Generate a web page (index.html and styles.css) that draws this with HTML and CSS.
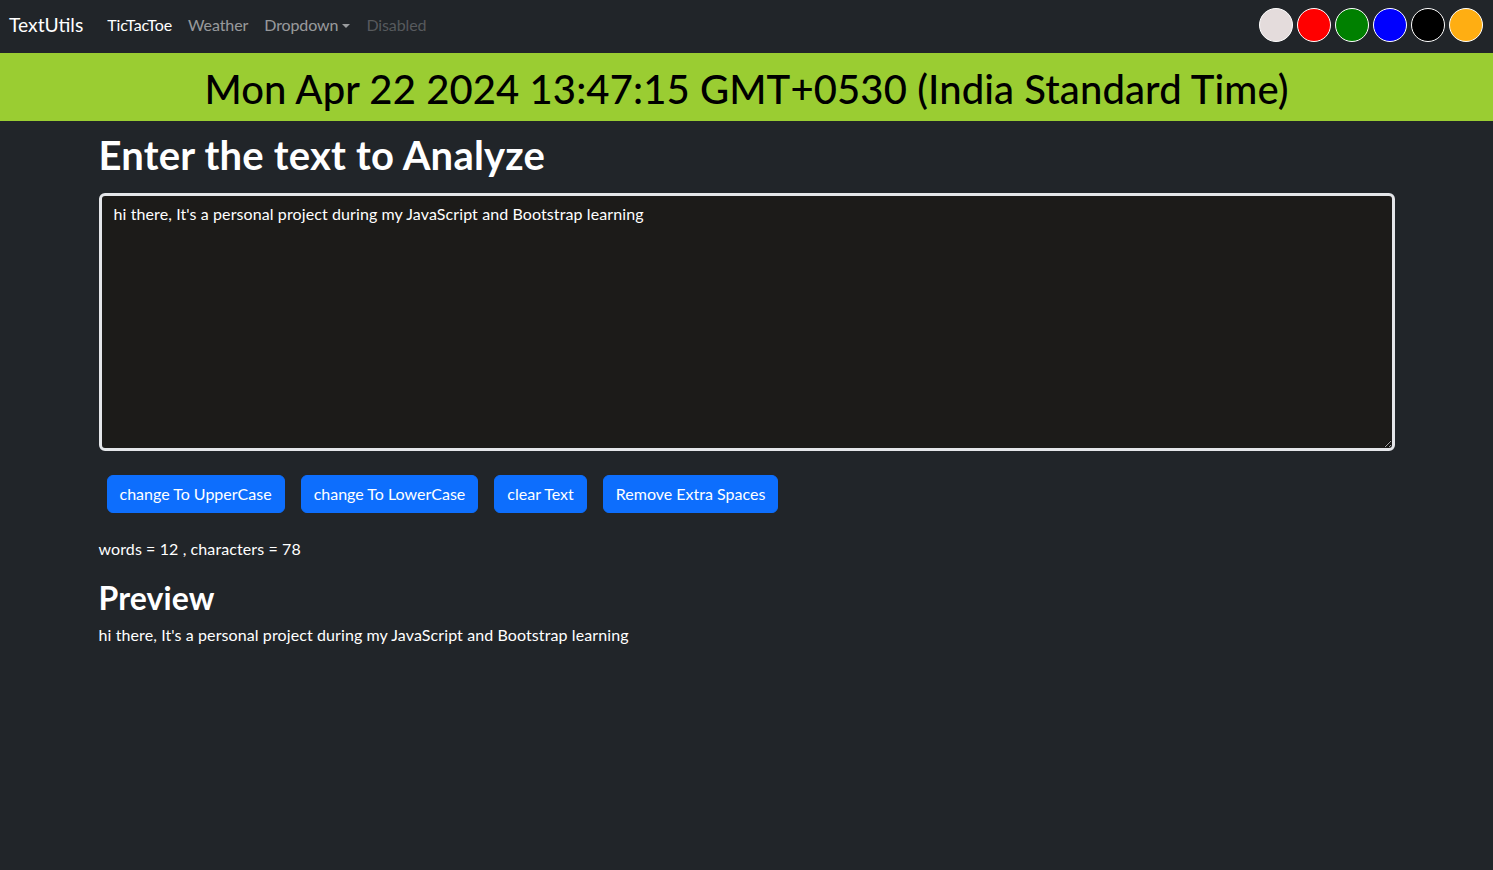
FILE: index.html
```html
<!DOCTYPE html>
<html lang="en">
<head>
<meta charset="utf-8">
<title>TextUtils</title>
<link rel="stylesheet" href="styles.css">
</head>
<body>
<nav class="navbar">
  <div class="nav-left">
    <a class="brand" href="#">TextUtils</a>
    <ul class="nav-links">
      <li><a class="nav-link active" href="#">TicTacToe</a></li>
      <li><a class="nav-link" href="#">Weather</a></li>
      <li><a class="nav-link dropdown" href="#">Dropdown<span class="caret"></span></a></li>
      <li><a class="nav-link disabled" href="#">Disabled</a></li>
    </ul>
  </div>
  <div class="swatches">
    <span class="swatch sw-light"></span>
    <span class="swatch sw-red"></span>
    <span class="swatch sw-green"></span>
    <span class="swatch sw-blue"></span>
    <span class="swatch sw-black"></span>
    <span class="swatch sw-orange"></span>
  </div>
</nav>
<div class="datebar">
  <h1 class="date">Mon Apr 22 2024 13:47:15 GMT+0530 (India Standard Time)</h1>
</div>
<main class="container">
  <h1 class="title">Enter the text to Analyze</h1>
  <textarea class="textbox" rows="8">hi there, It's a personal project during my JavaScript and Bootstrap learning</textarea>
  <div class="buttons">
    <button class="btn">change To UpperCase</button>
    <button class="btn">change To LowerCase</button>
    <button class="btn">clear Text</button>
    <button class="btn">Remove Extra Spaces</button>
  </div>
</main>
<section class="container summary">
  <p class="counts">words = 12 , characters = 78</p>
  <h2 class="preview-title">Preview</h2>
  <p class="preview">hi there, It's a personal project during my JavaScript and Bootstrap learning</p>
</section>
</body>
</html>
```
FILE: styles.css
```css
* { box-sizing: border-box; }
html, body {
  margin: 0;
  padding: 0;
  background: #212529;
  color: #fff;
  font-family: Lato, "Open Sans", sans-serif;
  font-size: 16px;
  line-height: 1.5;
  letter-spacing: 0.1px;
  min-height: 870px;
}
.navbar {
  height: 53px;
  display: flex;
  align-items: center;
  justify-content: space-between;
  padding: 0 10px 3px 9px;
  background: #212529;
}
.nav-left { display: flex; align-items: center; }
.brand {
  color: #fff;
  text-decoration: none;
  font-size: 19.3px;
  letter-spacing: 0;
  margin-right: 16px;
}
.nav-links {
  display: flex;
  list-style: none;
  margin: 0;
  padding: 0;
}
.nav-link {
  display: block;
  padding: 8px;
  color: rgba(255,255,255,.55);
  text-decoration: none;
  font-size: 16px;
  letter-spacing: -0.1px;
}
.nav-link.active { color: #fff; }
.nav-link.disabled { color: rgba(255,255,255,.25); }
.caret {
  display: inline-block;
  margin-left: 4px;
  vertical-align: 3px;
  border-top: 4px solid rgba(255,255,255,.55);
  border-left: 4px solid transparent;
  border-right: 4px solid transparent;
}
.swatches { display: flex; gap: 4px; }
.swatch {
  width: 34px;
  height: 34px;
  border-radius: 50%;
  border: 1px solid #fff;
}
.sw-light { background: #e4dcdc; }
.sw-red { background: #ff0000; }
.sw-green { background: #008000; }
.sw-blue { background: #0000ff; }
.sw-black { background: #000; }
.sw-orange { background: #ffae12; }
.datebar {
  background: #9acd32;
  height: 68px;
  padding-top: 3px;
  display: flex;
  align-items: center;
  justify-content: center;
}
.date {
  margin: 0;
  color: #000;
  font-size: 40px;
  font-weight: 500;
  line-height: 1.2;
  letter-spacing: 0.1px;
}
.container {
  width: 1320px;
  margin: 0 auto;
  padding: 0 12px;
}
.title {
  margin: 10px 0 14px;
  font-size: 40px;
  font-weight: 700;
  line-height: 1.2;
  letter-spacing: 0.2px;
}
.textbox {
  display: block;
  width: 100%;
  height: 258px;
  padding: 6px 12px;
  background: #1c1b19;
  color: #fff;
  border: 3px solid #e4e6e9;
  border-radius: 6px;
  font-family: inherit;
  font-size: 16px;
  line-height: 1.5;
  letter-spacing: 0.1px;
  resize: vertical;
}
.buttons {
  display: flex;
  margin-top: 24px;
}
.btn {
  margin: 0 8px;
  height: 38px;
  padding: 6px 12px;
  background: #0d6efd;
  border: 1px solid #0d6efd;
  border-radius: 6px;
  color: #fff;
  font-family: inherit;
  font-size: 16px;
  line-height: 1.5;
  letter-spacing: 0;
}
.summary { margin-top: 24px; }
.counts { margin: 0 0 18px; }
.preview-title {
  margin: 0 0 6px;
  font-size: 32px;
  font-weight: 700;
  line-height: 1.2;
}
.preview { margin: 0; }
```
